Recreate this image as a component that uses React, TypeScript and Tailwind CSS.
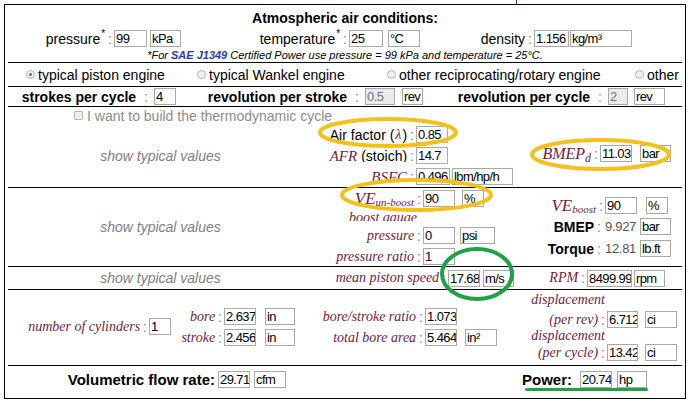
import { ReactNode } from 'react';
import clsx from 'clsx';

const serif = "font-['Liberation_Serif','Times_New_Roman',serif] italic text-[#6e1d3e]";

function Box({ v, className = '', gray = false }: { v: string; className?: string; gray?: boolean }) {
  return (
    <span
      className={clsx(
        'inline-block h-[17px] shrink-0 overflow-hidden whitespace-nowrap border border-[#a9a9a9] pl-[1px] text-[13px] font-normal leading-[15px] tracking-[-0.6px]',
        gray ? 'bg-[#ebebeb] text-[#777]' : 'bg-white text-black',
        className
      )}
    >
      {v}
    </span>
  );
}

function Colon({ wide = false }: { wide?: boolean }) {
  return (
    <span className={clsx('font-normal text-[#8a8a8a]', wide ? 'ml-[8px] mr-[6px]' : 'ml-[3px] mr-[2px]')}>:</span>
  );
}

function Label({
  w,
  children,
  className = '',
  wide = false,
}: {
  w: string;
  children: ReactNode;
  className?: string;
  wide?: boolean;
}) {
  return (
    <div className={clsx('flex shrink-0 items-center justify-end whitespace-nowrap', w, className)}>
      {children}
      <Colon wide={wide} />
    </div>
  );
}

function Star() {
  return <span className="relative top-[-5px] ml-[1px] text-[10px]">*</span>;
}

function Radio({ label, checked = false, w = '' }: { label: string; checked?: boolean; w?: string }) {
  return (
    <div className={clsx('flex shrink-0 items-center', w)}>
      <span className="flex h-[9px] w-[9px] items-center justify-center rounded-full border border-[#b4b4b4] bg-[#efefef]">
        {checked && <span className="h-[3px] w-[3px] rounded-full bg-[#6a6a6a]" />}
      </span>
      <span className="ml-[3px]">{label}</span>
    </div>
  );
}

function Typical() {
  return <span className="italic text-[#808080]">show typical values</span>;
}

export default function App() {
  return (
    <div className="relative h-[405px] w-[693px] overflow-hidden bg-white pl-[4px] pt-[4px] font-['Liberation_Sans',Arial,sans-serif] text-[14px] text-black">
      <div className="flex h-[395px] w-[682px] flex-col border border-black px-[3px] leading-[16px]">
        {/* atmospheric air */}
        <div className="h-[57px] shrink-0">
          <div className="pt-[5px] text-center font-bold">Atmospheric air conditions:</div>
          <div className="mt-[4px] flex h-[17px] items-center">
            <Label w="w-[106px]">
              pressure
              <Star />
            </Label>
            <Box v="99" className="w-[33px]" />
            <Box v="kPa" className="ml-[3px] w-[31px]" />
            <Label w="w-[168px]">
              temperature
              <Star />
            </Label>
            <Box v="25" className="w-[34px]" />
            <Box v="°C" className="ml-[5px] w-[32px]" />
            <Label w="w-[114px]">density</Label>
            <Box v="1.156" className="w-[35px]" />
            <Box v="kg/m³" className="ml-[1px] w-[62px]" />
          </div>
          <div className="mt-[2px] text-center text-[11px] italic leading-[13px]">
            *For <span className="font-bold text-[#2c39b0]">SAE J1349</span> Certified Power use pressure = 99 kPa and
            temperature = 25°C.
          </div>
        </div>

        {/* engine type */}
        <div className="flex h-[24px] shrink-0 items-center border-t border-black pl-[18px]">
          <Radio checked label="typical piston engine" w="w-[171px]" />
          <Radio label="typical Wankel engine" w="w-[190px]" />
          <Radio label="other reciprocating/rotary engine" w="w-[248px]" />
          <Radio label="other" />
        </div>

        {/* strokes */}
        <div className="flex h-[20px] shrink-0 items-center border-t border-black font-bold">
          <Label w="w-[146px]" wide>
            strokes per cycle
          </Label>
          <Box v="4" className="w-[22px]" />
          <Label w="w-[189px]" wide>
            revolution per stroke
          </Label>
          <Box v="0.5" gray className="w-[30px]" />
          <Box v="rev" className="ml-[7px] w-[21px]" />
          <Label w="w-[185px]" wide>
            revolution per cycle
          </Label>
          <Box v="2" gray className="w-[20px]" />
          <Box v="rev" className="ml-[6px] w-[31px]" />
        </div>

        {/* thermodynamic cycle */}
        <div className="h-[81px] shrink-0 border-t border-black">
          <div className="flex h-[17px] items-center pl-[66px] text-[#8c8c8c]">
            <span className="h-[9px] w-[9px] rounded-[1px] border border-[#b4b4b4] bg-[#efefef]" />
            <span className="ml-[4px]">I want to build the thermodynamic cycle</span>
          </div>
          <div className="flex h-[63px]">
            <div className="flex w-[305px] shrink-0 items-center justify-center">
              <Typical />
            </div>
            <div className="flex w-[200px] shrink-0 flex-col gap-[4px] pt-[2px]">
              <div className="flex h-[17px]">
                <Label w="w-[103px]">
                  Air factor (<span className={clsx(serif, 'px-[1px]')}>λ</span>)
                </Label>
                <Box v="0.85" className="w-[32px]" />
              </div>
              <div className="flex h-[17px]">
                <Label w="w-[103px]">
                  <span className={clsx(serif, 'mr-[4px] text-[15px]')}>AFR</span>
                  <span className="inline-block h-[12px] overflow-hidden leading-[13px]">(stoich)</span>
                </Label>
                <Box v="14.7" className="w-[32px]" />
              </div>
              <div className="flex h-[17px]">
                <Label w="w-[103px]">
                  <span className={clsx(serif, 'text-[15px]')}>BSFC</span>
                </Label>
                <Box v="0.496" className="w-[34px]" />
                <Box v="lbm/hp/h" className="ml-[2px] w-[61px]" />
              </div>
            </div>
            <div className="mt-[21px] flex h-[17px]">
              <Label w="w-[87px]">
                <span className={clsx(serif, 'text-[16px]')}>BMEP</span>
                <span className={clsx(serif, 'relative top-[4px] text-[12px]')}>d</span>
              </Label>
              <Box v="11.03" className="w-[32px]" />
              <Box v="bar" className="ml-[8px] w-[31px]" />
            </div>
          </div>
        </div>

        {/* volumetric efficiency */}
        <div className="flex h-[79px] shrink-0 border-t border-black">
          <div className="flex w-[305px] shrink-0 items-center justify-center">
            <Typical />
          </div>
          <div className="flex w-[200px] shrink-0 flex-col pt-[2px]">
            <div className="flex h-[17px]">
              <Label w="w-[110px]">
                <span className={clsx(serif, 'text-[17px]')}>VE</span>
                <span className={clsx(serif, 'relative top-[3px] text-[11px]')}>un-boost</span>
              </Label>
              <Box v="90" className="w-[32px]" />
              <Box v="%" className="ml-[7px] w-[22px]" />
            </div>
            <div className={clsx(serif, 'mt-[2px] h-[12px] w-[104px] overflow-hidden text-right leading-[17px]')}>
              boost gauge
            </div>
            <div className="mt-[6px] flex h-[17px]">
              <Label w="w-[110px]">
                <span className={serif}>pressure</span>
              </Label>
              <Box v="0" className="w-[32px]" />
              <Box v="psi" className="ml-[5px] w-[35px]" />
            </div>
            <div className="mt-[4px] flex h-[17px]">
              <Label w="w-[110px]">
                <span className={serif}>pressure ratio</span>
              </Label>
              <Box v="1" className="w-[32px]" />
            </div>
          </div>
          <div className="flex flex-col pt-[9px]">
            <div className="flex h-[17px]">
              <Label w="w-[92px]">
                <span className={clsx(serif, 'text-[17px]')}>VE</span>
                <span className={clsx(serif, 'relative top-[3px] text-[11px]')}>boost</span>
              </Label>
              <Box v="90" className="w-[32px]" />
              <Box v="%" className="ml-[9px] w-[22px]" />
            </div>
            <div className="mt-[4px] flex h-[17px] items-center">
              <Label w="w-[90px]" className="font-bold">
                BMEP
              </Label>
              <span className="w-[37px] shrink-0 pl-[2px] text-[13px] tracking-[-0.3px] text-[#555]">9.927</span>
              <Box v="bar" className="w-[31px]" />
            </div>
            <div className="mt-[5px] flex h-[17px] items-center">
              <Label w="w-[90px]" className="font-bold">
                Torque
              </Label>
              <span className="w-[37px] shrink-0 pl-[2px] text-[13px] tracking-[-0.3px] text-[#555]">12.81</span>
              <Box v="lb.ft" className="w-[31px]" />
            </div>
          </div>
        </div>

        {/* piston speed */}
        <div className="flex h-[23px] shrink-0 items-center border-t border-black">
          <div className="flex w-[305px] shrink-0 justify-center">
            <Typical />
          </div>
          <Label w="w-[135px]">
            <span className={serif}>mean piston speed</span>
          </Label>
          <Box v="17.68" className="w-[32px]" />
          <Box v="m/s" className="ml-[3px] w-[31px]" />
          <Label w="w-[73px]">
            <span className={serif}>RPM</span>
          </Label>
          <Box v="8499.99" className="w-[45px]" />
          <Box v="rpm" className="ml-[2px] w-[31px]" />
        </div>

        {/* geometry */}
        <div className="flex h-[76px] shrink-0 items-start border-t border-black">
          <div className="flex pt-[28px]">
            <Label w="w-[141px]">
              <span className={serif}>number of cylinders</span>
            </Label>
            <Box v="1" className="w-[22px]" />
          </div>
          <div className="flex flex-col gap-[4px] pt-[18px]">
            <div className="flex h-[17px]">
              <Label w="w-[53px]">
                <span className={serif}>bore</span>
              </Label>
              <Box v="2.637" className="w-[32px]" />
              <Box v="in" className="ml-[9px] w-[30px]" />
            </div>
            <div className="flex h-[17px]">
              <Label w="w-[53px]">
                <span className={serif}>stroke</span>
              </Label>
              <Box v="2.456" className="w-[32px]" />
              <Box v="in" className="ml-[9px] w-[30px]" />
            </div>
          </div>
          <div className="flex flex-col gap-[4px] pt-[18px]">
            <div className="flex h-[17px]">
              <Label w="w-[130px]">
                <span className={serif}>bore/stroke ratio</span>
              </Label>
              <Box v="1.073" className="w-[32px]" />
            </div>
            <div className="flex h-[17px]">
              <Label w="w-[130px]">
                <span className={serif}>total bore area</span>
              </Label>
              <Box v="5.464" className="w-[32px]" />
              <Box v="in²" className="ml-[8px] w-[32px]" />
            </div>
          </div>
          <div className="flex flex-col pt-[2px]">
            <div className={clsx(serif, 'h-[16px] w-[108px] text-right')}>displacement</div>
            <div className="mt-[3px] flex h-[17px]">
              <Label w="w-[110px]">
                <span className={serif}>(per rev)</span>
              </Label>
              <Box v="6.712" className="w-[31px]" />
              <Box v="ci" className="ml-[7px] w-[32px]" />
            </div>
            <div className={clsx(serif, 'h-[16px] w-[108px] text-right')}>displacement</div>
            <div className="flex h-[17px]">
              <Label w="w-[110px]">
                <span className={serif}>(per cycle)</span>
              </Label>
              <Box v="13.42" className="w-[31px]" />
              <Box v="ci" className="ml-[7px] w-[32px]" />
            </div>
          </div>
        </div>

        {/* results */}
        <div className="flex h-[33px] shrink-0 items-start border-t border-black pt-[5px] text-[15px]">
          <div className="flex h-[17px] w-[210px] shrink-0 items-center justify-end pr-[3px] font-bold">
            Volumetric flow rate:
          </div>
          <Box v="29.71" className="w-[32px]" />
          <Box v="cfm" className="ml-[4px] w-[32px]" />
          <div className="flex h-[17px] w-[294px] shrink-0 items-center justify-end pr-[8px] font-bold">Power:</div>
          <Box v="20.74" className="w-[32px]" />
          <Box v="hp" className="ml-[5px] w-[30px]" />
        </div>
      </div>

      {/* annotations drawn over the page */}
      <div className="absolute left-[516px] top-0 h-[4px] w-[1px] bg-[#7b2e68]" />
      <svg className="absolute left-[318px] top-[117px]" width="140" height="31" viewBox="0 0 140 31">
        <ellipse cx="70" cy="15.5" rx="68" ry="13.5" fill="none" stroke="#f3c11b" strokeWidth="4" />
      </svg>
      <svg className="absolute left-[530px] top-[138px]" width="141" height="33" viewBox="0 0 141 33">
        <ellipse cx="70.5" cy="16.5" rx="68.5" ry="14.5" fill="none" stroke="#f3c11b" strokeWidth="4" />
      </svg>
      <svg className="absolute left-[340px] top-[178px]" width="153" height="34" viewBox="0 0 153 34">
        <ellipse cx="76.5" cy="17" rx="74.5" ry="15" fill="none" stroke="#f3c11b" strokeWidth="4" />
      </svg>
      <svg className="absolute left-[440px] top-[247px]" width="74" height="54" viewBox="0 0 74 54">
        <ellipse cx="37" cy="27" rx="35" ry="25" fill="none" stroke="#22a046" strokeWidth="4" />
      </svg>
      <div className="absolute left-[525px] top-[388px] h-[3px] w-[123px] rounded-full bg-[#22a046]" />
    </div>
  );
}
